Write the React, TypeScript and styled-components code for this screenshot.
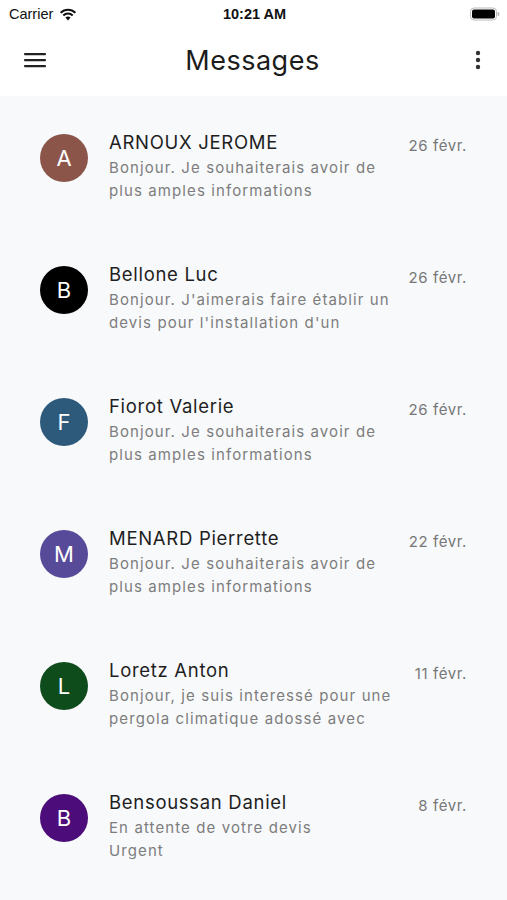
import React from "react";
import styled, { createGlobalStyle } from "styled-components";

const Global = createGlobalStyle`
  html, body { margin: 0; padding: 0; background: #f8f9fb; }
  body { font-family: Inter, "Noto Sans", sans-serif; -webkit-font-smoothing: antialiased; }
  * { box-sizing: border-box; }
`;

const Page = styled.div`
  width: 507px;
  min-height: 900px;
  background: #f8f9fb;
`;

const Top = styled.div`
  background: #ffffff;
`;

const StatusBar = styled.div`
  height: 28px;
  display: grid;
  grid-template-columns: 1fr auto 1fr;
  align-items: center;
  padding: 0 7px 0 9px;
  font-family: "Liberation Sans", Arial, sans-serif;
  font-size: 14.5px;
  color: #111;
`;

const Carrier = styled.div`
  display: flex;
  align-items: center;
  gap: 6px;
`;

const Time = styled.div`
  font-weight: 700;
`;

const Battery = styled.div`
  justify-self: end;
  display: flex;
  align-items: center;
`;

const Header = styled.header`
  height: 68px;
  display: grid;
  grid-template-columns: 1fr auto 1fr;
  align-items: center;
  padding: 0 26px 4px 24px;
`;

const Title = styled.h1`
  margin: 0;
  font-family: Inter, "Noto Sans", sans-serif;
  font-weight: 400;
  font-size: 27px;
  color: #1c1c1c;
  letter-spacing: 0.5px;
`;

const IconBtn = styled.div<{ $end?: boolean }>`
  display: flex;
  align-items: center;
  justify-self: ${(p) => (p.$end ? "end" : "start")};
`;

const List = styled.div`
  display: flex;
  flex-direction: column;
`;

const Row = styled.div`
  display: grid;
  grid-template-columns: 48px 1fr auto;
  column-gap: 21px;
  height: 132px;
  padding: 34px 40px 0 40px;
`;

const Avatar = styled.div<{ $bg: string }>`
  width: 48px;
  height: 48px;
  margin-top: 4px;
  border-radius: 50%;
  background: ${(p) => p.$bg};
  color: #fff;
  display: flex;
  align-items: center;
  justify-content: center;
  font-size: 22px;
  font-weight: 400;
`;

const Body = styled.div`
  display: flex;
  flex-direction: column;
  min-width: 0;
`;

const Name = styled.div`
  font-size: 18.5px;
  line-height: 24px;
  color: #1e1e1e;
  letter-spacing: 0.7px;
`;

const Preview = styled.div`
  margin-top: 2px;
  font-size: 15px;
  line-height: 23px;
  color: #7d7d7d;
  letter-spacing: 1.1px;
  white-space: pre;
`;

const DateText = styled.div`
  margin-top: 4px;
  font-size: 15px;
  line-height: 24px;
  color: #777;
  letter-spacing: 0.6px;
`;

const messages = [
  { l: "A", bg: "#8b5649", name: "ARNOUX JEROME", text: "Bonjour. Je souhaiterais avoir de\nplus amples informations", date: "26 févr." },
  { l: "B", bg: "#000000", name: "Bellone Luc", text: "Bonjour. J'aimerais faire établir un\ndevis pour l'installation d'un", date: "26 févr." },
  { l: "F", bg: "#2d5a7a", name: "Fiorot Valerie", text: "Bonjour. Je souhaiterais avoir de\nplus amples informations", date: "26 févr." },
  { l: "M", bg: "#574a98", name: "MENARD Pierrette", text: "Bonjour. Je souhaiterais avoir de\nplus amples informations", date: "22 févr." },
  { l: "L", bg: "#0e4c1c", name: "Loretz Anton", text: "Bonjour, je suis interessé pour une\npergola climatique adossé avec", date: "11 févr." },
  { l: "B", bg: "#4c0d7a", name: "Bensoussan Daniel", text: "En attente de votre devis\nUrgent", date: "8 févr." },
];

export default function App() {
  return (
    <Page>
      <Global />
      <Top>
        <StatusBar>
          <Carrier>
            Carrier
            <svg width="18" height="13" viewBox="0 0 18 13">
              <path d="M9 12.5 L6.4 9.6 A3.8 3.8 0 0 1 11.6 9.6 Z" fill="#111" />
              <path d="M4.3 7.5 A6.7 6.7 0 0 1 13.7 7.5" stroke="#111" strokeWidth="2" fill="none" />
              <path d="M1.6 4.8 A10.4 10.4 0 0 1 16.4 4.8" stroke="#111" strokeWidth="2" fill="none" />
            </svg>
          </Carrier>
          <Time>10:21 AM</Time>
          <Battery>
            <svg width="30" height="14" viewBox="0 0 30 14">
              <rect x="0.5" y="1" width="26" height="12" rx="3.5" fill="none" stroke="#bbb" strokeWidth="1" />
              <rect x="2" y="2.5" width="23" height="9" rx="2" fill="#000" />
              <rect x="27.5" y="5" width="1.8" height="4" rx="0.8" fill="#bbb" />
            </svg>
          </Battery>
        </StatusBar>
        <Header>
          <IconBtn>
            <svg width="22" height="16" viewBox="0 0 22 16">
              <rect x="0" y="1" width="22" height="2.2" rx="1" fill="#222" />
              <rect x="0" y="7" width="22" height="2.2" rx="1" fill="#222" />
              <rect x="0" y="13" width="22" height="2.2" rx="1" fill="#222" />
            </svg>
          </IconBtn>
          <Title>Messages</Title>
          <IconBtn $end>
            <svg width="6" height="20" viewBox="0 0 6 20">
              <circle cx="3" cy="3" r="2.2" fill="#333" />
              <circle cx="3" cy="10" r="2.2" fill="#333" />
              <circle cx="3" cy="17" r="2.2" fill="#333" />
            </svg>
          </IconBtn>
        </Header>
      </Top>
      <List>
        {messages.map((m, i) => (
          <Row key={i}>
            <Avatar $bg={m.bg}>{m.l}</Avatar>
            <Body>
              <Name>{m.name}</Name>
              <Preview>{m.text}</Preview>
            </Body>
            <DateText>{m.date}</DateText>
          </Row>
        ))}
      </List>
    </Page>
  );
}
